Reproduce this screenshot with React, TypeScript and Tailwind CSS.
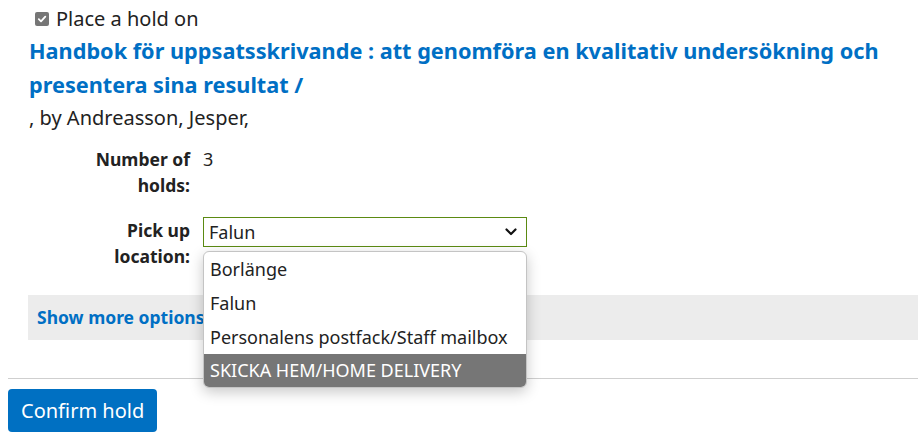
import React from "react"

// ── Data ──────────────────────────────────────────────────────────────────────

const locations = [
  "Borlänge",
  "Falun",
  "Personalens postfack/Staff mailbox",
  "SKICKA HEM/HOME DELIVERY",
]

const font = { fontFamily: '"Noto Sans", "Open Sans", sans-serif' }

// ── Bits ──────────────────────────────────────────────────────────────────────

function CheckedBox() {
  return (
    <span className="flex items-center justify-center w-[14px] h-[14px] rounded-[2px] bg-[#767676] shrink-0">
      <svg width="10" height="10" viewBox="0 0 10 10" aria-hidden="true">
        <path d="M1.8 5.2 L4 7.3 L8.3 2.6" fill="none" stroke="#fff" strokeWidth="1.8" strokeLinecap="round" strokeLinejoin="round" />
      </svg>
    </span>
  )
}

function Chevron() {
  return (
    <svg width="12" height="8" viewBox="0 0 12 8" aria-hidden="true">
      <path d="M1.5 1.5 L6 6 L10.5 1.5" fill="none" stroke="#111" strokeWidth="2.2" strokeLinecap="round" strokeLinejoin="round" />
    </svg>
  )
}

// ── Page ──────────────────────────────────────────────────────────────────────

export default function App() {
  return (
    <div className="relative w-[918px] h-[446px] overflow-hidden bg-white text-[#222]" style={font}>
      {/* Record heading */}
      <div className="pl-[29px] pt-[4px]">
        <label className="flex items-center gap-[7px] pl-[6px] h-[30px] text-[20px]">
          <CheckedBox />
          <span>Place a hold on</span>
        </label>
        <h2 className="text-[21.7px] font-bold leading-[34px] text-[#006fc4] pr-[20px]">
          Handbok för uppsatsskrivande : att genomföra en kvalitativ undersökning och presentera sina resultat /
        </h2>
        <p className="text-[20px] leading-[32px]">, by Andreasson, Jesper,</p>
      </div>

      {/* Hold details */}
      <div className="mt-[12px] grid grid-cols-[104px_1fr] gap-x-[13px] gap-y-[19px] pl-[86px] text-[17.5px]">
        <span className="text-right font-bold leading-[26px]">Number of holds:</span>
        <span className="leading-[26px] text-[18px]">3</span>

        <span className="text-right font-bold leading-[26px]">Pick up location:</span>
        <div className="relative text-[18px]">
          <div className="flex items-center justify-between w-[324px] h-[30px] border border-[#5b8a12] pl-[5px] pr-[9px]">
            <span>Falun</span>
            <Chevron />
          </div>

          {/* Open select list */}
          <ul className="absolute left-0 top-[34px] z-10 w-[324px] overflow-hidden rounded-[6px] border border-[#c4c4c4] bg-white shadow-[0_4px_14px_rgba(0,0,0,0.22)]">
            {locations.map((loc, i) => (
              <li
                key={loc}
                className={
                  i === 3
                    ? "h-[33px] leading-[33px] px-[6px] bg-[#767676] text-white"
                    : "h-[34px] leading-[34px] px-[6px]"
                }>
                {loc}
              </li>
            ))}
          </ul>
        </div>
      </div>

      {/* More options */}
      <div className="mt-[26px] ml-[28px] h-[45px] flex items-center pl-[9px] bg-[#ececec]">
        <a className="text-[17.5px] font-bold text-[#006fc4]">Show more options</a>
      </div>

      <hr className="mt-[38px] ml-[8px] border-t border-[#cfcfcf]" />

      <div className="pl-[8px] pt-[10px]">
        <button type="button" className="h-[43px] px-[13px] rounded-[4px] bg-[#0070c2] text-white text-[20px]">
          Confirm hold
        </button>
      </div>
    </div>
  )
}
